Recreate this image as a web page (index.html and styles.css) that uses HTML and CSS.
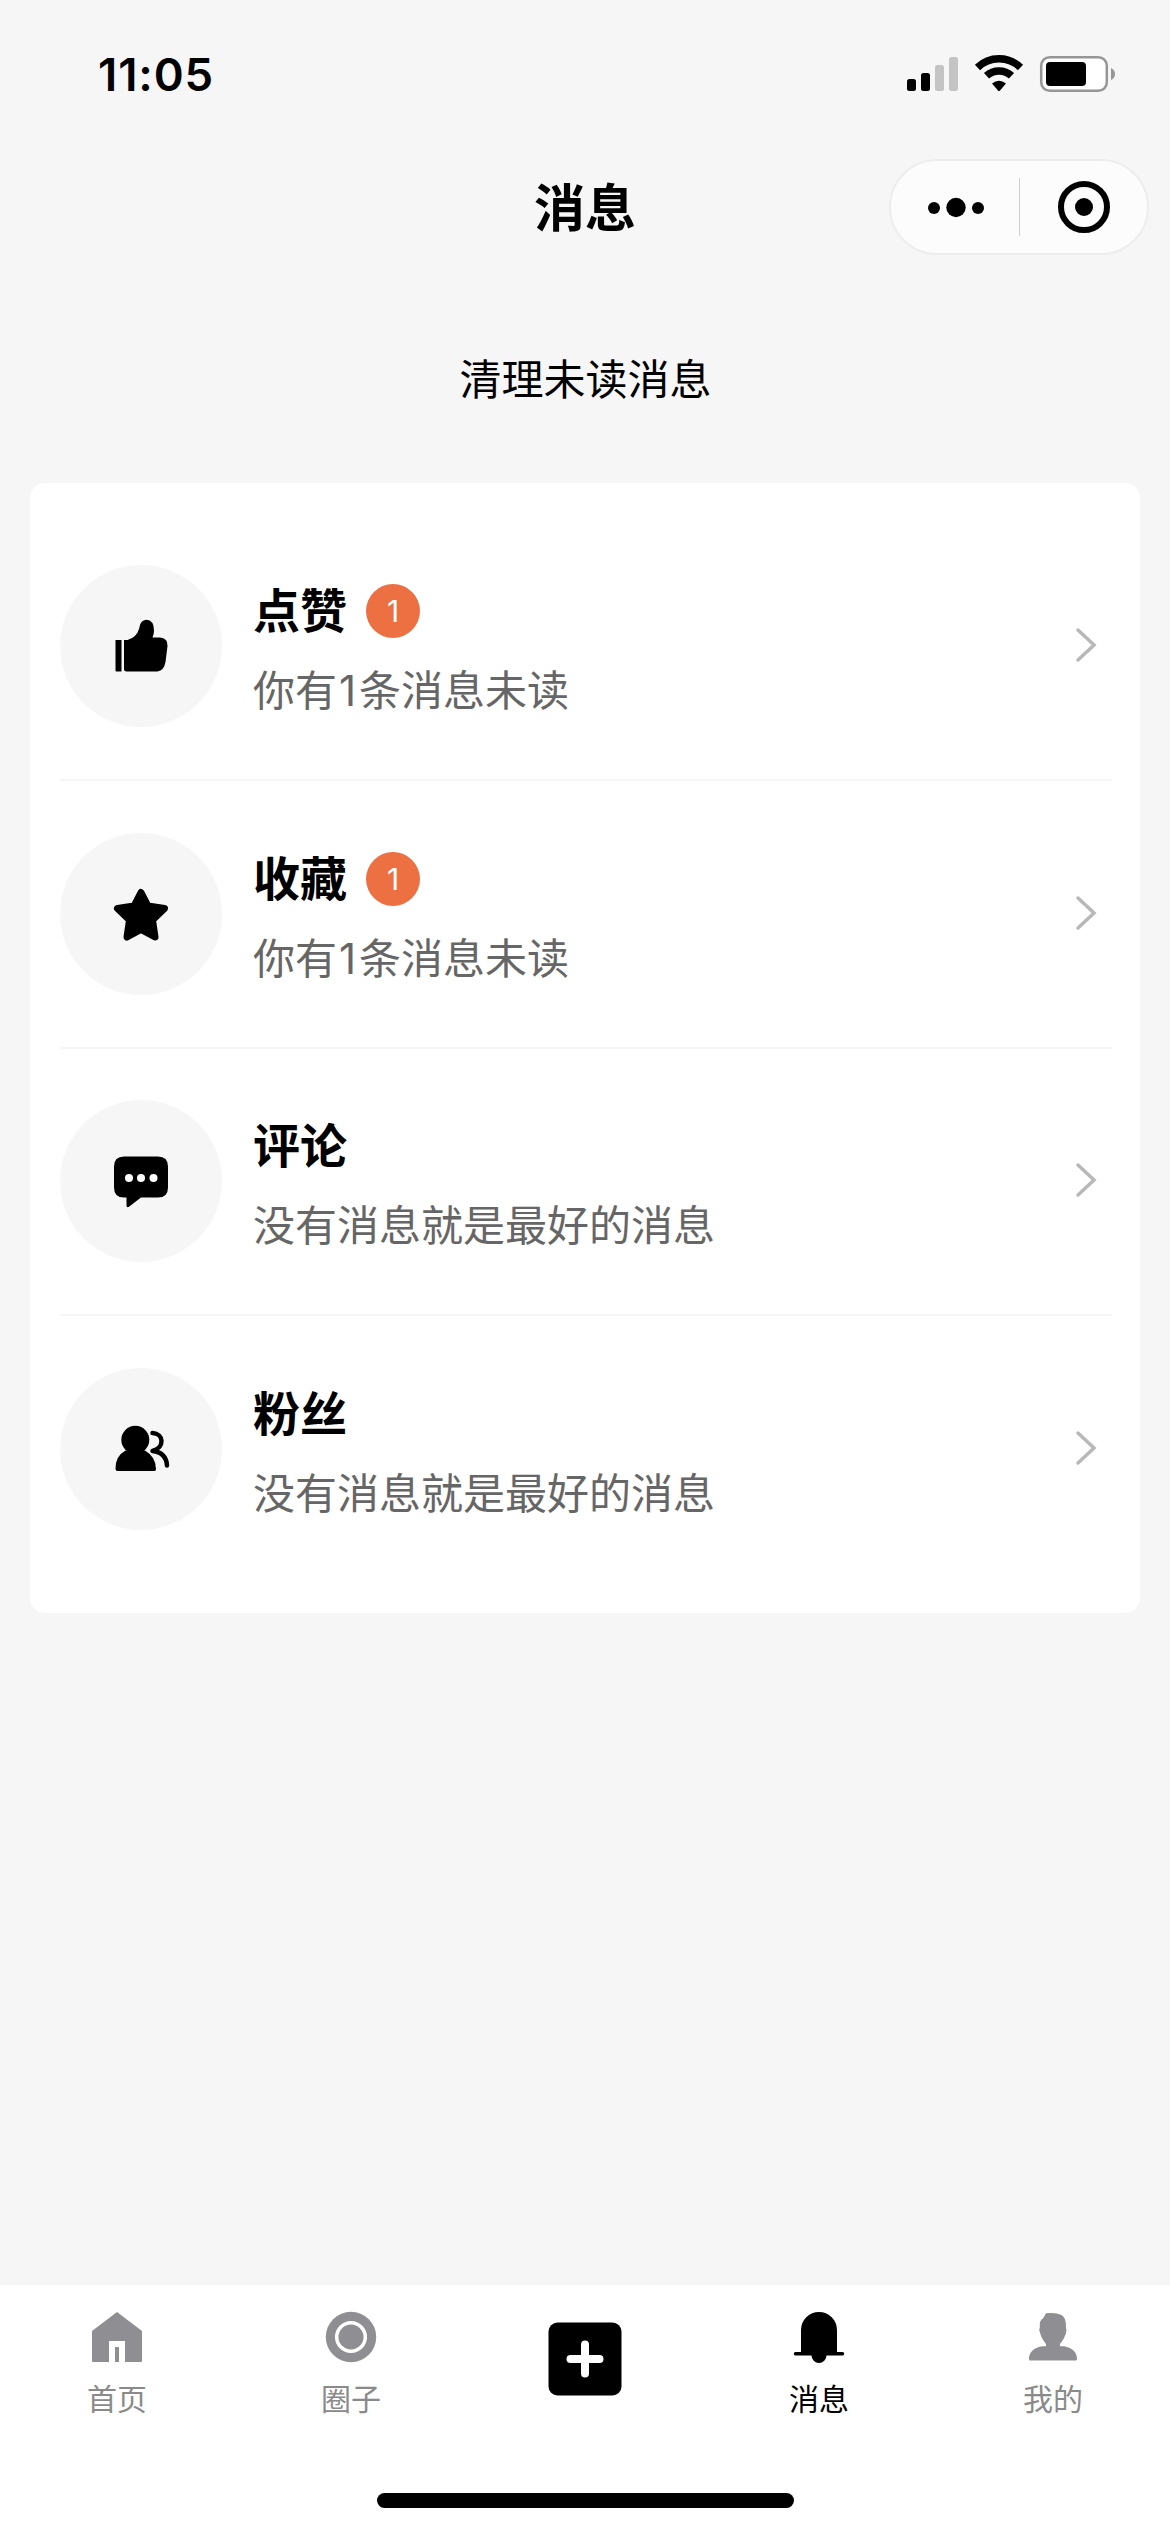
FILE: index.html
```html
<!DOCTYPE html>
<html lang="zh-CN">
<head>
<meta charset="utf-8">
<title>消息</title>
<link rel="stylesheet" href="styles.css">
</head>
<body>
<div class="statusbar">
  <span class="time">11:05</span>
  <svg class="status-icons" viewBox="0 0 210 40" width="210" height="40">
    <rect x="1" y="25" width="9" height="12" rx="2.5"/>
    <rect x="15" y="19" width="9" height="18" rx="2.5"/>
    <rect class="dim" x="29" y="11" width="9" height="26" rx="2.5"/>
    <rect class="dim" x="43" y="3" width="9" height="34" rx="2.5"/>
    <path class="wave" d="M71.500 13.500a31 31 0 0 1 43 0M80.500 21.800a18.500 18.500 0 0 1 25 0"/>
    <path d="M86 29.500q7-5.500 14 0l-6.200 7.200q-.8.800-1.600 0z"/>
    <rect class="shell" x="135.200" y="3.200" width="65.600" height="33.600" rx="8.500"/>
    <rect x="140" y="8" width="40" height="24" rx="4"/>
    <path class="nub" d="M205 14q4 2 4 6t-4 6z"/>
  </svg>
</div>
<header class="navbar">
  <h1 class="nav-title">消息</h1>
  <div class="capsule">
    <svg class="dots" viewBox="0 0 56 20" width="56" height="20"><circle cx="6" cy="11" r="6"/><circle cx="28" cy="10.500" r="9.700"/><circle cx="50" cy="11" r="6"/></svg>
    <span class="capsule-line"></span>
    <svg class="target" viewBox="0 0 52 52" width="52" height="52"><circle class="ring" cx="26" cy="26" r="23"/><circle cx="26" cy="26" r="9"/></svg>
  </div>
</header>
<div class="clear">清理未读消息</div>
<main class="card">
  <section class="row">
    <div class="avatar">
      <svg viewBox="0 0 56 56" width="56" height="56"><path d="M2.500 22h6v31.500H3.500q-1 0-1-1zM11 22h3.500q9-2.500 11.500-11l1-4Q28.500 2 33.500 1.800q7.500.4 7.500 11 0 3.500-1.500 6.700h7.500q8 .5 7.500 8.500l-2 16Q51 52.500 44.500 53.500H13q-2-.5-2-2z"/></svg>
    </div>
    <div class="body">
      <div class="head"><span class="name">点赞</span><span class="badge">1</span></div>
      <div class="desc">你有<span class="count">1</span>条消息未读</div>
    </div>
    <svg class="arrow" viewBox="0 0 22 36" width="22" height="36"><path d="M3 2l16 15L3 32"/></svg>
  </section>
  <section class="row">
    <div class="avatar">
      <svg viewBox="0 0 56 56" width="56" height="56"><path class="round" d="M28 6.500l7 13.500 16.500 2.500-12 11.500L42 51 28 43.500 14 51l2.500-17-12-11.500L21 20z"/></svg>
    </div>
    <div class="body">
      <div class="head"><span class="name">收藏</span><span class="badge">1</span></div>
      <div class="desc">你有<span class="count">1</span>条消息未读</div>
    </div>
    <svg class="arrow" viewBox="0 0 22 36" width="22" height="36"><path d="M3 2l16 15L3 32"/></svg>
  </section>
  <section class="row">
    <div class="avatar">
      <svg viewBox="0 0 56 56" width="56" height="56"><path d="M11 3.500h34q10 0 10 10v21q0 10-10 10H28L16 53.700q-2.500 1.300-2.500-1.200v-8H11q-10 0-10-10v-21q0-10 10-10z"/><g class="light"><circle cx="16" cy="25" r="4"/><circle cx="28" cy="25" r="4"/><circle cx="40.500" cy="25" r="4"/></g></svg>
    </div>
    <div class="body">
      <div class="head"><span class="name">评论</span></div>
      <div class="desc">没有消息就是最好的消息</div>
    </div>
    <svg class="arrow" viewBox="0 0 22 36" width="22" height="36"><path d="M3 2l16 15L3 32"/></svg>
  </section>
  <section class="row">
    <div class="avatar">
      <svg viewBox="0 0 56 56" width="56" height="56"><circle cx="22.300" cy="18.800" r="14"/><path d="M12.500 29.500h19.500Q43 36 43 48q0 2-1.500 2h-37Q2.500 50 2.500 47.500q0-12.500 10-18z"/><path class="outline" d="M39.500 12c11.500 .5 12.500 14.500 0 18 10 1 14 7 14.500 14.500"/></svg>
    </div>
    <div class="body">
      <div class="head"><span class="name">粉丝</span></div>
      <div class="desc">没有消息就是最好的消息</div>
    </div>
    <svg class="arrow" viewBox="0 0 22 36" width="22" height="36"><path d="M3 2l16 15L3 32"/></svg>
  </section>
</main>
<footer class="footer">
  <nav class="tabs">
    <div class="tab">
      <svg viewBox="0 0 52 52" width="52" height="52"><path d="M26 1L51 20v30q0 1-1 1H34V30H18v21H2q-1 0-1-1V20z"/><rect x="24" y="36" width="4" height="15"/></svg>
      <span>首页</span>
    </div>
    <div class="tab">
      <svg viewBox="0 0 52 52" width="52" height="52"><circle cx="26" cy="26" r="25.200"/><circle class="hole" cx="26" cy="26" r="14.300"/></svg>
      <span>圈子</span>
    </div>
    <div class="tab tab-add">
      <svg viewBox="0 0 74 74" width="74" height="74"><rect x=".5" y=".5" width="73" height="73" rx="9"/><path class="plus" d="M37 22.500v29M22.500 37h29"/></svg>
    </div>
    <div class="tab active">
      <svg viewBox="0 0 52 52" width="52" height="52"><path d="M8 41V19a18 18 0 0 1 36 0v22h5.500a1.700 1.700 0 0 1 0 3.500h-16a7.500 7.500 0 0 1-15 0h-16a1.700 1.700 0 0 1 0-3.500z"/></svg>
      <span>消息</span>
    </div>
    <div class="tab">
      <svg viewBox="0 0 52 52" width="52" height="52"><path d="M19 2.300q10-1 15 1.500 5.500 2.500 5 13 1 2.500 0 5-1 5-6 11.200v2.200h4Q50 38 50 48q0 1.500-1.500 1.500h-45Q2 49.500 2 48q0-10 13-12.800h4V33Q14 27 13 21.500q-1.500-2.500-.2-5Q12 9.500 16 7.500z"/></svg>
      <span>我的</span>
    </div>
  </nav>
  <div class="home-indicator"></div>
</footer>
</body>
</html>
```
FILE: styles.css
```css
* { box-sizing: border-box; }

body {
  margin: 0;
  width: 1170px;
  height: 2532px;
  display: flex;
  flex-direction: column;
  background: #f6f6f6;
  color: #000;
  font-family: Inter, "Noto Sans CJK SC", sans-serif;
}

svg { display: block; flex: none; overflow: visible; }

.statusbar {
  height: 150px;
  padding: 54px 54px 0 98px;
  display: flex;
  justify-content: space-between;
  align-items: flex-start;
}
.time { font-size: 45.500px; font-weight: 600; line-height: 42px; letter-spacing: 0.900px; }
.dim { fill: #c4c4c4; }
.wave { fill: none; stroke: #000; stroke-width: 7.5; }
.shell { fill: #fff; stroke: #969696; stroke-width: 2.5; }
.nub { fill: #969696; }

.navbar {
  height: 114px;
  padding: 0 21px 0 281px;
  display: grid;
  grid-template-columns: 1fr 260px;
  align-items: center;
}
.nav-title {
  margin: 3px 0 0;
  font-size: 51px;
  font-weight: 700;
  line-height: 60px;
  text-align: center;
}
.capsule {
  height: 96px;
  border: 2px solid #ededed;
  border-radius: 48px;
  background: #fcfcfc;
  display: flex;
  align-items: center;
  padding: 0 37px 0 37px;
  justify-content: space-between;
}
.capsule-line { width: 1px; height: 58px; margin-right: 4px; background: #cfcfcf; }
.ring { fill: none; stroke: #000; stroke-width: 6; }

.clear {
  height: 219px;
  padding: 86px 0 0 1px;
  font-size: 42px;
  line-height: 60px;
  text-align: center;
}

.card {
  height: 1130px;
  margin: 0 30px;
  padding: 30px 28px 0 30px;
  border-radius: 15px;
  background: #fff;
}
.row {
  height: 267.75px;
  display: flex;
  align-items: center;
  border-bottom: 2px solid #f6f6f6;
}
.row:last-child { border-bottom-color: transparent; }
.avatar {
  flex: none;
  width: 162px;
  height: 162px;
  border-radius: 50%;
  background: #f6f6f6;
  display: flex;
  align-items: center;
  justify-content: center;
}
.round { stroke: #000; stroke-width: 7; stroke-linejoin: round; }
.light { fill: #fff; }
.outline { fill: none; stroke: #000; stroke-width: 4.5; stroke-linecap: round; stroke-linejoin: round; }
.body { flex: 1; margin-left: 31px; padding-top: 6px; }
.head { display: flex; align-items: center; gap: 19px; height: 70px; }
.name { font-size: 47px; font-weight: 700; line-height: 70px; }
.badge {
  width: 54px;
  height: 54px;
  border-radius: 50%;
  background: #ec7042;
  color: #fff;
  font-size: 30px;
  line-height: 54px;
  text-align: center;
}
.desc { margin-top: 14px; font-size: 42px; line-height: 62px; color: #666; }
.count { margin: 0 3px 0 2px; }
.arrow { margin-right: 15px; }
.arrow path { fill: none; stroke: #b8b8b8; stroke-width: 3.5; stroke-linecap: round; }

.footer {
  height: 247px;
  margin-top: auto;
  background: #fff;
  display: flex;
  flex-direction: column;
  align-items: center;
  justify-content: space-between;
  padding-bottom: 24px;
}
.tabs { width: 100%; display: grid; grid-template-columns: repeat(5, 1fr); }
.tab {
  padding-top: 26px;
  display: flex;
  flex-direction: column;
  align-items: center;
  gap: 16px;
  color: #8a8a8a;
  font-size: 30px;
  line-height: 40px;
}
.tab svg { fill: #8f8e93; }
.tab .hole { stroke: #fff; stroke-width: 3.5; }
.tab-add { padding-top: 37px; }
.tab.tab-add svg, .tab.active svg { fill: #000; }
.plus { stroke: #fff; stroke-width: 8; stroke-linecap: round; }
.tab.active { color: #000; }
.home-indicator { width: 417px; height: 15px; border-radius: 8px; background: #000; }
```
